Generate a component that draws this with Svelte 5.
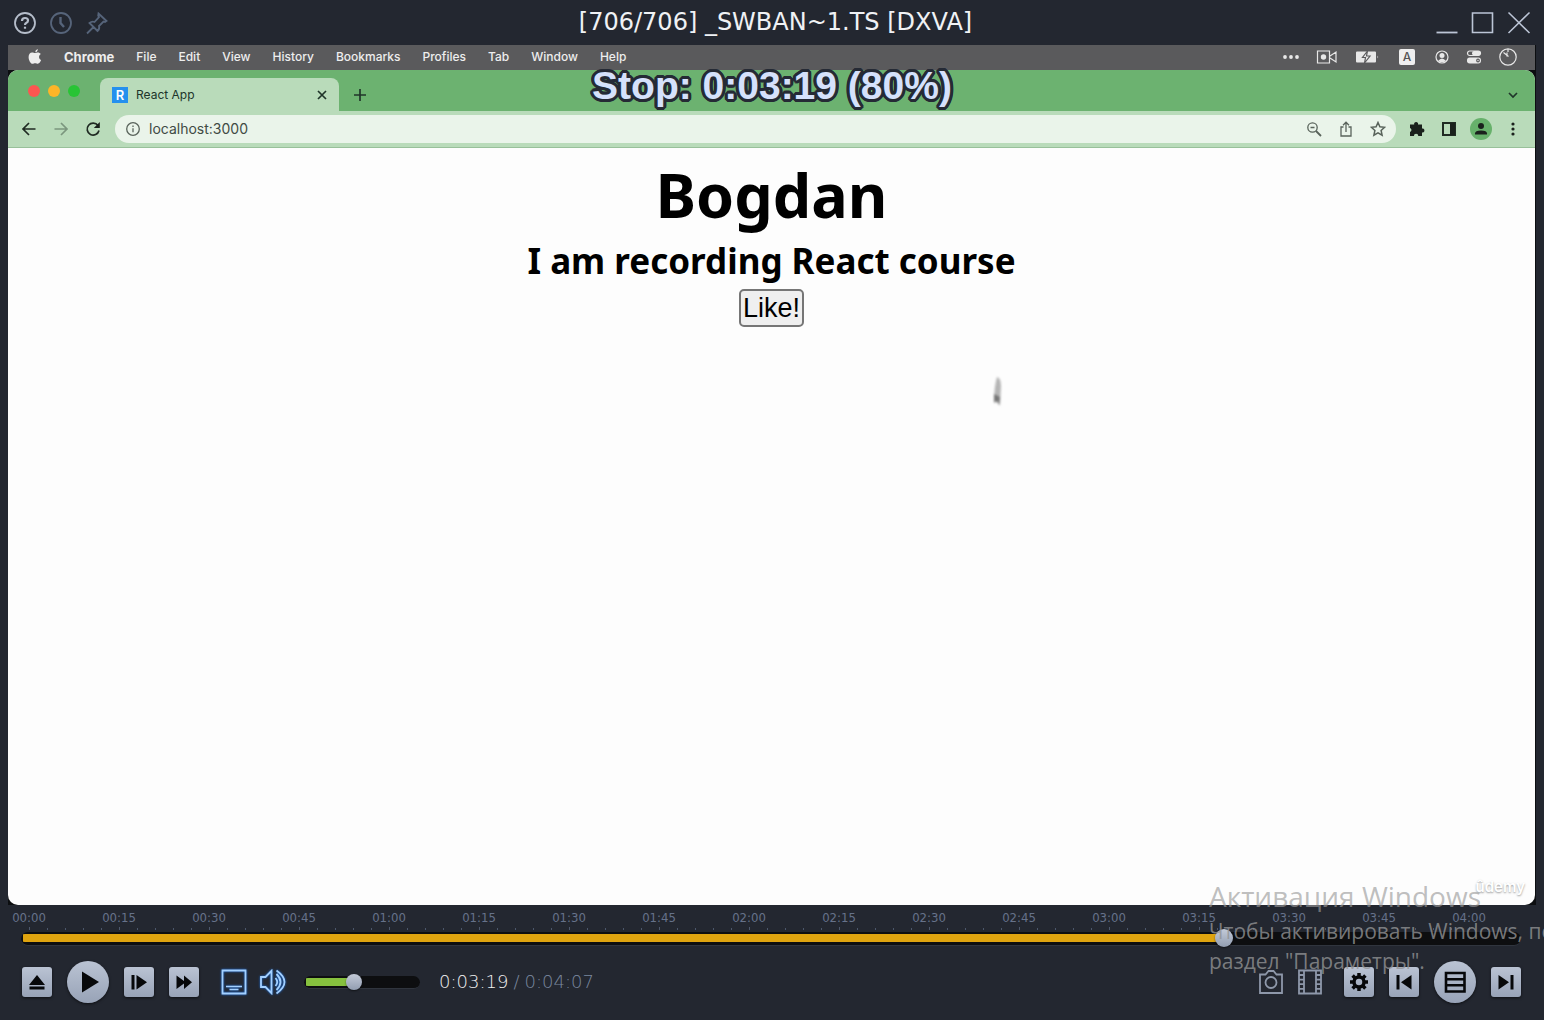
<script>
  const menus = ['File', 'Edit', 'View', 'History', 'Bookmarks', 'Profiles', 'Tab', 'Window', 'Help'];
  const duration = 247;
  let position = $state(199);
  let volume = $state(42);

  const pad = (n) => String(n).padStart(2, '0');
  const clock = (s) => `0:${pad(Math.floor(s / 60))}:${pad(s % 60)}`;
  const labels = Array.from({ length: 17 }, (_, i) => `${pad(Math.floor(i / 4))}:${pad((i % 4) * 15)}`);
  const ticks = Array.from({ length: 83 }, (_, i) => i % 5 === 0);
</script>

<div class="player">
  <header class="titlebar">
    <div class="tools">
      <button aria-label="Help" class="bright">
        <svg width="24" height="24" viewBox="0 0 24 24"><circle cx="12" cy="12" r="10" /><path d="M9 10q0-3 3-3t3 2.500q0 1.500-1.500 2.200T12 14" stroke-width="2.200" /><path d="M12 15.700v2" stroke-width="2.200" /></svg>
      </button>
      <button aria-label="History">
        <svg width="24" height="24" viewBox="0 0 24 24"><circle cx="12" cy="12" r="10" /><path d="M11.500 6v6l3.500 4" stroke-width="2.400" /></svg>
      </button>
      <button aria-label="Pin">
        <svg width="24" height="24" viewBox="0 0 24 24"><path d="M13.500 2.500l8 7.500-1.500 1-1.500-.5-4.500 4.500q1 3-1.500 5L4.500 12q2.500-2 5-1l4.500-5-.8-1.500zM8.500 16L2 22.500" /></svg>
      </button>
    </div>
    <h1>[706/706] _SWBAN~1.TS [DXVA]</h1>
    <div class="tools wins">
      <button aria-label="Minimize"><svg width="24" height="24" viewBox="0 0 24 24"><path d="M1.500 21.500h21" stroke-width="1.800" /></svg></button>
      <button aria-label="Maximize"><svg width="24" height="24" viewBox="0 0 24 24"><path d="M1.500 2h20v19.500h-20z" stroke-width="1.600" /></svg></button>
      <button aria-label="Close"><svg width="24" height="24" viewBox="0 0 24 24"><path d="M1.500 1.500l21 20.500M22.500 1.500L1.500 22" stroke-width="1.500" /></svg></button>
    </div>
  </header>

  <main class="video">
    <nav class="macbar" aria-label="Menu bar">
      <svg class="apple" width="14" height="17" viewBox="0 0 14 17"><path d="M9.800 1Q7.200 1.700 7.200 4.200 9.700 4 9.800 1zM7.100 5.100C6.200 5 5.300 4.400 4.100 4.400 2 4.400.600 6.200.600 9c0 3.300 2 6.800 3.900 6.800 1 0 1.500-.6 2.700-.6s1.600.6 2.600.6c1.500 0 2.700-2.100 3.300-3.700-2.800-1.400-2.500-5-.2-6.100-.8-1.100-2-1.600-3-1.600-1.200 0-2 .7-2.800.7z" /></svg>
      <strong>Chrome</strong>
      {#each menus as m}<span>{m}</span>{/each}
      <div class="status">
        <svg width="18" height="16" viewBox="0 0 18 16"><g class="solid"><circle cx="3" cy="8" r="1.900" /><circle cx="9" cy="8" r="1.900" /><circle cx="15" cy="8" r="1.900" /></g></svg>
        <svg width="22" height="16" viewBox="0 0 22 16"><path d="M1.500 2h12v12h-12zM14 7l6-4v10l-6-4" /><circle class="solid" cx="7.500" cy="8" r="2.700" /></svg>
        <svg width="26" height="16" viewBox="0 0 26 16"><path class="solid" d="M3 2.500h18q1 0 1 1v9q0 1-1 1H3q-1 0-1-1v-9q0-1 1-1zM23.500 6.500q1.500 1.500 0 3z" /><path d="M13.500 2l-5 6.500h3l-1 5.500 5.500-7h-3.500z" class="bolt" /></svg>
        <span class="key">A</span>
        <svg width="16" height="16" viewBox="0 0 16 16"><circle cx="8" cy="8" r="6" /><circle class="solid" cx="8" cy="6.500" r="2.500" /><path class="solid" d="M4 12q4-5 8 0-4 2.500-8 0z" /></svg>
        <svg width="16" height="16" viewBox="0 0 16 16"><rect x="1.500" y="2" width="13" height="4.500" rx="2.200" /><rect class="solid" x="6" y="2" width="8.500" height="4.500" rx="2.200" /><rect class="solid" x="1" y="8.500" width="14" height="6" rx="2.700" /><circle cx="12" cy="11.500" r="1.300" stroke="#5a5a5c" /></svg>
        <svg width="20" height="20" viewBox="0 0 20 20"><circle cx="10" cy="10" r="8.200" /><path d="M5.500 5.500l5 4M9 5.500v4M10 2v3" /></svg>
      </div>
    </nav>

    <section class="browser">
      <div class="tabs">
        <div class="lights"><i></i><i></i><i></i></div>
        <div class="tab">
          <span class="fav">R</span>
          <span class="name">React App</span>
          <button aria-label="Close tab"><svg width="12" height="12" viewBox="0 0 12 12"><path d="M2 2l8 8M10 2l-8 8" /></svg></button>
        </div>
        <button aria-label="New tab" class="plus"><svg width="14" height="14" viewBox="0 0 14 14"><path d="M7 1v12M1 7h12" /></svg></button>
        <button aria-label="Search tabs" class="down"><svg width="14" height="14" viewBox="0 0 14 14"><path d="M3 5l4 4 4-4" /></svg></button>
      </div>

      <div class="toolbar">
        <button aria-label="Back"><svg width="16" height="16" viewBox="0 0 16 16"><path d="M14.500 8H2M8 2L2 8l6 6" /></svg></button>
        <button aria-label="Forward" class="dim"><svg width="16" height="16" viewBox="0 0 16 16"><path d="M1.500 8H14M8 2l6 6-6 6" /></svg></button>
        <button aria-label="Reload"><svg width="16" height="16" viewBox="0 0 16 16"><path d="M13 4.500A6 6 0 1 0 14 9.500" /><path class="fill" d="M14.800 1v6H8.800z" /></svg></button>
        <div class="omni">
          <svg width="16" height="16" viewBox="0 0 16 16"><circle cx="8" cy="8" r="6.300" /><path d="M8 7.300v4M8 4.500v1.500" /></svg>
          <input aria-label="Address" value="localhost:3000" />
          <button aria-label="Zoom"><svg width="16" height="16" viewBox="0 0 16 16"><circle cx="6.500" cy="6.500" r="4.700" /><path d="M10 10l5 5" stroke-width="1.800" /><path d="M4.500 6.500h4" stroke-width="1.700" /></svg></button>
          <button aria-label="Share"><svg width="16" height="16" viewBox="0 0 16 16"><path d="M5.500 6H3v9h10V6h-2.500M8 11V1.500M5 4.200l3-3 3 3" /></svg></button>
          <button aria-label="Bookmark"><svg width="16" height="16" viewBox="0 0 16 16"><path d="M8 1.500l1.900 4.300 4.700.5-3.500 3.200 1 4.700L8 11.800l-4.100 2.400 1-4.700L1.400 6.300l4.700-.5z" stroke-width="1.500" /></svg></button>
        </div>
        <button aria-label="Extensions"><svg width="16" height="16" viewBox="0 0 16 16"><path class="fill" d="M1 3.500h4.200a2 2 0 1 1 3.800 0h4v4a2 2 0 1 1 0 3.900V15H9.300a2.200 2.200 0 0 0-4.400 0H1v-3.900a2.100 2.100 0 0 0 0-4z" /></svg></button>
        <button aria-label="Side panel"><svg width="16" height="16" viewBox="0 0 16 16"><path d="M2 2h12v12H2z" stroke-width="2" /><path class="fill" d="M9 2h5v12H9z" /></svg></button>
        <button aria-label="Profile"><svg width="22" height="22" viewBox="0 0 22 22"><circle cx="11" cy="11" r="11" class="disc" /><circle class="fill" cx="11" cy="8" r="3" /><path class="fill" d="M5 16.500v-1q0-3 6-3t6 3v1z" /></svg></button>
        <button aria-label="More"><svg width="16" height="16" viewBox="0 0 16 16"><circle class="fill" cx="8" cy="3" r="1.600" /><circle class="fill" cx="8" cy="8" r="1.600" /><circle class="fill" cx="8" cy="13" r="1.600" /></svg></button>
      </div>

      <div class="page">
        <h2>Bogdan</h2>
        <h3>I am recording React course</h3>
        <button class="like">Like!</button>
        <svg class="cursor" width="16" height="36" viewBox="0 0 16 36"><path d="M7 3q4 1 4 9l-1 20-2-4-4 1q0-16 3-26z" fill="#b5b5b5" /><path d="M4 20l6 3-1 8-2-4-3 1z" fill="#777" /></svg>
      </div>
    </section>
    <output class="osd">Stop: 0:03:19 (80%)</output>
    <span class="brand">ûdemy</span>
  </main>

  <section class="timeline" aria-label="Timeline">
    <div class="labels">
      {#each labels as l}<span style:width="{1500 / duration}%">{l}</span>{/each}
    </div>
    <div class="ticks">
      {#each ticks as major}<i class:major style:width="{300 / duration}%"></i>{/each}
    </div>
    <div class="rail seek">
      <input type="range" aria-label="Seek" min="0" max={duration} bind:value={position} style:--p="{(position / duration) * 100}%" />
    </div>
  </section>

  <footer class="controls">
    <button class="key-btn" aria-label="Eject"><svg width="30" height="30" viewBox="0 0 30 30"><path d="M15 8l8 10H7zM7.500 19.500h15v3h-15z" /></svg></button>
    <button class="key-btn round" aria-label="Play"><svg width="42" height="42" viewBox="0 0 42 42"><path d="M15 10.500L32 21 15 31.500z" /></svg></button>
    <button class="key-btn" aria-label="Step"><svg width="30" height="30" viewBox="0 0 30 30"><path d="M7.500 8h3v14.500h-3zM12.500 8L23 15.200l-10.500 7.300z" /></svg></button>
    <button class="key-btn" aria-label="Fast forward"><svg width="30" height="30" viewBox="0 0 30 30"><path d="M7.500 8.500l7.500 5.500V8.500l8 6.700-8 6.800v-5.500L7.500 22z" /></svg></button>
    <button class="line blue first" aria-label="Subtitles"><svg width="26" height="26" viewBox="0 0 26 26"><path d="M1.500 1.500h23v23h-23z" /><path d="M5 17.500h16M8.500 20.500h9" stroke-width="1.600" /></svg></button>
    <button class="line blue" aria-label="Mute"><svg width="28" height="26" viewBox="0 0 28 26"><path d="M2 8h4.500L12.500 1.800v22.400L6.500 18H2zM16.500 9q3.500 4 0 8M17.500 5q8 8 0 16M17.500 1.500q16 11.500 0 23" /></svg></button>
    <div class="rail vol">
      <input type="range" aria-label="Volume" min="0" max="100" bind:value={volume} style:--p="{volume}%" />
    </div>
    <div class="time"><span>{clock(position)}</span><em>/</em><em>{clock(duration)}</em></div>
    <button class="line push" aria-label="Screenshot"><svg width="26" height="26" viewBox="0 0 26 26"><path d="M2 5.500h5.500l3-3.500h5l3 3.500H24V24H2z" /><circle cx="13" cy="13.500" r="5.500" /></svg></button>
    <button class="line film" aria-label="Record clip"><svg width="26" height="26" viewBox="0 0 26 26"><path d="M2 1.500h22v23H2zM7 2v22M19 2v22M2 6h5M2 10.600h5M2 15.200h5M2 19.800h5M19 6h5M19 10.600h5M19 15.200h5M19 19.800h5" /></svg></button>
    <button class="key-btn" aria-label="Settings"><svg width="30" height="30" viewBox="0 0 30 30"><circle cx="15" cy="15" r="5" fill="none" stroke="#07080a" stroke-width="3.500" /><path d="M15 6v4M15 20v4M6 15h4M20 15h4M8.600 8.600l2.900 2.900M18.500 18.500l2.900 2.900M21.400 8.600l-2.900 2.900M11.500 18.500l-2.900 2.900" stroke="#07080a" stroke-width="3.500" /></svg></button>
    <button class="key-btn" aria-label="Previous"><svg width="30" height="30" viewBox="0 0 30 30"><path d="M7.500 8h3v14.500h-3zM22.500 8v14.500L12 15.200z" /></svg></button>
    <button class="key-btn round" aria-label="Playlist"><svg width="42" height="42" viewBox="0 0 42 42"><path d="M12 12h18.500v18.500H12zM12 18.200h18.500M12 24.300h18.500" fill="none" stroke="#07080a" stroke-width="2.600" /></svg></button>
    <button class="key-btn" aria-label="Next"><svg width="30" height="30" viewBox="0 0 30 30"><path d="M19.500 8h3v14.500h-3zM7.500 8L18 15.200 7.500 22.500z" /></svg></button>
  </footer>

  <aside class="notice">
    <p class="big">Активация Windows</p>
    <p>Чтобы активировать Windows, пе</p>
    <p>раздел "Параметры".</p>
  </aside>
</div>

<style>
  :global(body) { background: #232730; }
  .player { min-height: 100vh; display: flex; flex-direction: column; position: relative; overflow: hidden; background: #232730; font-family: Inter, "Liberation Sans", sans-serif; }
  .player * { box-sizing: border-box; }
  button { border: 0; padding: 0; background: none; color: inherit; font: inherit; display: flex; align-items: center; justify-content: center; }
  svg { display: block; flex: none; }
  h1, h2, h3, p { margin: 0; }

  .titlebar { height: 45px; flex: none; display: grid; grid-template-columns: 1fr auto 1fr; align-items: center; padding: 0 13px; }
  .titlebar h1 { font: 400 24px/45px "DejaVu Sans", sans-serif; color: #f0f2f5; padding-left: 7px; }
  .tools { display: flex; gap: 12px; }
  .tools svg { fill: none; stroke: #56647a; stroke-width: 1.8; }
  .tools .bright svg { stroke: #b5bdca; }
  .wins { justify-content: flex-end; }
  .wins svg { stroke: #bcc5d6; }

  .video { flex: 1; display: flex; flex-direction: column; position: relative; margin: 0 8px; background: #0c0e10; padding-right: 1px; }
  .macbar { height: 25px; flex: none; display: flex; align-items: center; gap: 22px; padding: 0 17px 2px 20px; background: #5a5a5c; color: #eee; font-size: 12px; font-weight: 500; }
  .macbar strong { font-weight: 700; font-size: 13px; }
  .apple { fill: #eee; }
  .status { margin-left: auto; display: flex; align-items: center; gap: 16px; }
  .status svg { fill: none; stroke: #e8e8e8; stroke-width: 1.2; }
  .status .solid { fill: #e8e8e8; stroke: none; }
  .status .bolt { fill: #eee; stroke: #5a5a5c; }
  .key { width: 16px; height: 16px; margin: 0 3px; border-radius: 2px; background: #efefef; color: #555; font-size: 12px; line-height: 16px; text-align: center; }

  .browser { flex: 1; display: flex; flex-direction: column; border-radius: 10px; overflow: hidden; background: #fdfdfd; }
  .tabs { height: 41px; display: flex; align-items: flex-end; background: #6cb270; color: #20352a; }
  .lights { display: flex; gap: 8px; align-self: center; padding: 0 20px; }
  .lights i { width: 12px; height: 12px; border-radius: 50%; background: #fc5650; }
  .lights i:nth-child(2) { background: #fdb528; }
  .lights i:nth-child(3) { background: #28c435; }
  .tab { width: 239px; height: 33px; display: flex; align-items: center; gap: 8px; padding: 0 11px 0 12px; background: #b9dbba; border-radius: 8px 8px 0 0; font-size: 12px; }
  .fav { width: 16px; height: 16px; background: #2490ee; color: #fff; font-size: 13px; line-height: 16px; font-weight: 600; text-align: center; }
  .name { flex: 1; }
  .tabs svg { fill: none; stroke: #20352a; stroke-width: 1.7; }
  .plus, .down { width: 32px; height: 33px; margin-left: 5px; }
  .down { margin-left: auto; margin-right: 6px; }
  .toolbar { height: 37px; display: flex; align-items: center; padding: 0 6px 0 5px; background: #b9dbba; border-bottom: 1px solid #98c09a; }
  .toolbar button { width: 32px; height: 28px; }
  .toolbar svg { fill: none; stroke: #202b23; stroke-width: 1.7; }
  .toolbar .dim svg { stroke: #7b967e; }
  .toolbar .fill { fill: #1a211c; stroke: none; }
  .toolbar .disc { fill: #67b16b; stroke: none; }
  .omni { flex: 1; height: 28px; display: flex; align-items: center; margin: 0 5px 0 6px; padding: 0 2px 0 10px; border-radius: 14px; background: #eaf4ea; }
  .omni svg { stroke: #59635b; stroke-width: 1.3; }
  .omni input { flex: 1; min-width: 0; border: 0; padding: 0 8px; background: none; color: #414b44; font: 400 14px/20px Inter, sans-serif; outline: 0; }

  .page { flex: 1; display: flex; flex-direction: column; align-items: center; padding-top: 9px; color: #000; font-family: "Noto Sans", sans-serif; }
  .page h2 { font-size: 61px; line-height: 76px; font-weight: 700; }
  .page h3 { font-size: 35px; line-height: 56px; font-weight: 700; }
  .like { height: 38px; padding: 0 2px; border: 2px solid #767676; border-radius: 5px; background: #efefef; font: 400 27px/32px "Liberation Sans", sans-serif; }
  .cursor { filter: blur(1px); position: absolute; left: 65%; top: 329px; margin-left: -11px; }
  .osd { position: absolute; top: 19px; left: 0; right: 0; text-align: center; font: 700 39px/44px "Liberation Sans", sans-serif; color: #d5e1fb; text-shadow: 3px 0 #252a35, -3px 0 #252a35, 0 3px #252a35, 0 -3px #252a35, 2px 2px #252a35, -2px 2px #252a35, 2px -2px #252a35, -2px -2px #252a35, 3px 1px #252a35, -3px 1px #252a35, 3px -1px #252a35, -3px -1px #252a35, 1px 3px #252a35, -1px 3px #252a35, 1px -3px #252a35, -1px -3px #252a35; }
  .brand { position: absolute; right: 11px; bottom: 9px; font-size: 15px; line-height: 18px; font-weight: 600; color: #fff; text-shadow: 0 1px 2px #999; }

  .timeline { flex: none; padding-top: 5px; }
  .labels, .ticks { display: flex; margin: 0 33px 0 29px; }
  .labels span { flex: none; transform: translateX(-50%); text-align: center; font: 400 13px/15px "DejaVu Sans Condensed", "Noto Sans", sans-serif; color: #66728a; }
  .ticks { height: 5px; align-items: flex-end; }
  .ticks i { flex: none; height: 2px; background: linear-gradient(90deg, #4c576b 1px, transparent 1px); }
  .ticks .major { height: 3px; }
  .rail { display: flex; background: #0d0e10; border-radius: 7px; border-bottom: 1px solid #30353e; }
  .seek { height: 14px; margin: 2px 23px 0 21px; --fill: #dfa40f; --dot: 18px; --lift: -5px; }
  .vol { width: 116px; height: 13px; margin-left: 2px; --fill: #86c13e; --dot: 16px; --lift: -4px; }
  input[type='range'] { appearance: none; flex: 1; min-width: 0; width: 100%; height: 12px; margin: 0; background: none; outline: 0; }
  input[type='range']::-webkit-slider-runnable-track { height: 8px; margin: 0; border-radius: 4px; background: linear-gradient(90deg, transparent 2px, var(--fill) 2px, var(--fill) var(--p), transparent var(--p)); }
  input[type='range']::-webkit-slider-thumb { appearance: none; width: var(--dot); height: var(--dot); margin-top: var(--lift); border-radius: 50%; background: linear-gradient(#c3cad8, #929db1); box-shadow: 0 1px 2px #0008; }

  .controls { flex: none; height: 74px; display: flex; align-items: center; gap: 15px; padding: 0 23px 2px 22px; }
  .key-btn { flex: none; width: 30px; height: 30px; border-radius: 3px; background: linear-gradient(#bac3d3, #98a3b7); box-shadow: 0 1px 3px #0009; }
  .key-btn svg { fill: #07080a; }
  .round { width: 42px; height: 42px; border-radius: 50%; }
  .line svg { fill: none; stroke: #8e98aa; stroke-width: 1.8; }
  .line.blue svg { stroke: #a3d0ff; filter: drop-shadow(0 0 1px #1a6fe0); }
  .first { margin-left: 7px; margin-right: -3px; }
  .push { margin-left: auto; margin-right: -2px; }
  .film { margin-right: 6px; }
  .time { display: flex; gap: 5px; margin-left: 4px; font: 200 18px/24px "DejaVu Sans", "DejaVu Sans Light", sans-serif; color: #f1f1f1; }
  .time em { font-style: normal; color: #7a879f; }

  .notice { position: absolute; left: 1209px; right: 0; bottom: 44px; overflow: hidden; white-space: nowrap; pointer-events: none; color: #929395cc; font: 400 21px/30px "Open Sans", "Noto Sans", sans-serif; }
  .notice .big { font-size: 28px; line-height: 40px; color: #9a9a9aa6; }
</style>
